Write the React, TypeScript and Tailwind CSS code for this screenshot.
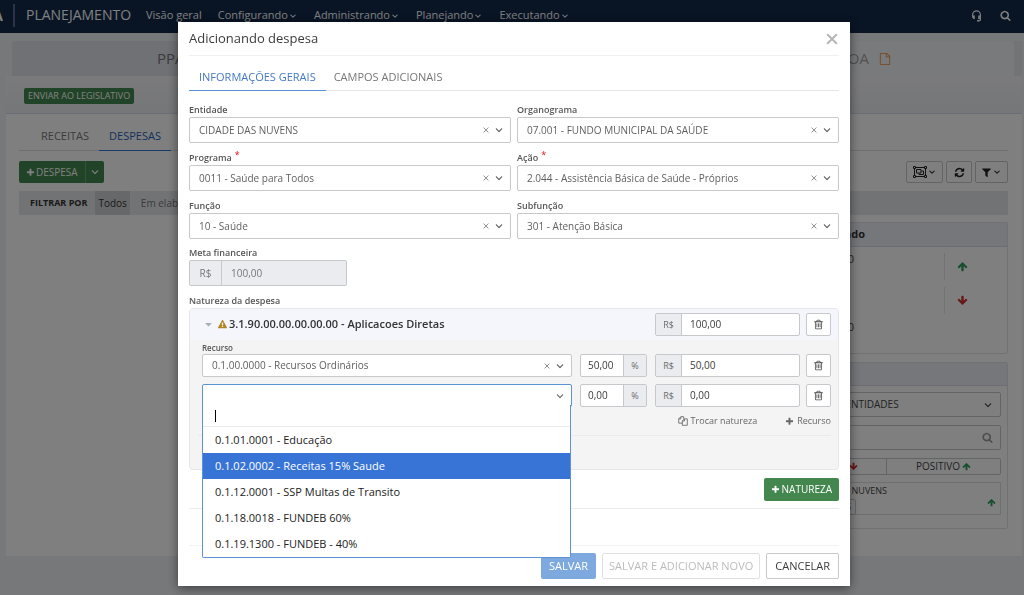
import React, { useState } from 'react';
import clsx from 'clsx';

// 1792-unit glyphs
const ICONS = {
  angleDown: 'M1395 736q0 13-10 23l-466 466q-10 10-23 10t-23-10l-466-466q-10-10-10-23t10-23l80-80q10-10 23-10t23 10l363 363 363-363q10-10 23-10t23 10l80 80q10 10 10 23z',
  caretDown: 'M1408 704q0 26-19 45l-448 448q-19 19-45 19t-45-19l-448-448q-19-19-19-45t19-45 45-19h896q26 0 45 19t19 45z',
  plus: 'M1600 736v192q0 40-28 68t-68 28h-416v416q0 40-28 68t-68 28h-192q-40 0-68-28t-28-68v-416h-416q-40 0-68-28t-28-68v-192q0-40 28-68t68-28h416v-416q0-40 28-68t68-28h192q40 0 68 28t28 68v416h416q40 0 68 28t28 68z',
  arrowUp: 'M1675 971q0 51-37 90l-75 75q-38 38-91 38-54 0-90-38l-294-293v704q0 52-37.500 84.500t-90.500 32.500h-128q-53 0-90.500-32.500t-37.500-84.500v-704l-294 293q-36 38-90 38t-90-38l-75-75q-38-38-38-90 0-53 38-91l651-651q35-37 90-37 54 0 91 37l651 651q37 39 37 91z',
  search: 'M1216 832q0-185-131.500-316.500t-316.500-131.500-316.500 131.500-131.500 316.500 131.500 316.500 316.500 131.500 316.500-131.500 131.500-316.500zm512 832q0 52-38 90t-90 38q-54 0-90-38l-343-342q-179 124-399 124-143 0-273.500-55.500t-225-150-150-225-55.500-273.500 55.500-273.500 150-225 225-150 273.500-55.500 273.500 55.500 225 150 150 225 55.500 273.500q0 220-124 399l343 343q37 37 37 90z',
  warning: 'M1024 1375v-190q0-14-9.500-23.500t-22.500-9.500h-192q-13 0-22.500 9.500t-9.500 23.500v190q0 14 9.500 23.500t22.500 9.500h192q13 0 22.500-9.500t9.500-23.500zm-2-374l18-459q0-12-10-19-13-11-24-11h-220q-11 0-24 11-10 7-10 21l17 457q0 10 10 16.500t24 6.500h185q14 0 23.500-6.500t10.500-16.500zm-14-934l768 1408q35 63-2 126-17 29-46.500 46t-63.500 17h-1536q-34 0-63.500-17t-46.500-46q-37-63-2-126l768-1408q17-31 47-49t65-18 65 18 47 49z',
  trash: 'M704 736v576q0 14-9 23t-23 9h-64q-14 0-23-9t-9-23v-576q0-14 9-23t23-9h64q14 0 23 9t9 23zm256 0v576q0 14-9 23t-23 9h-64q-14 0-23-9t-9-23v-576q0-14 9-23t23-9h64q14 0 23 9t9 23zm256 0v576q0 14-9 23t-23 9h-64q-14 0-23-9t-9-23v-576q0-14 9-23t23-9h64q14 0 23 9t9 23zm128 724v-948h-896v948q0 22 7 40.500t14.500 27 10.500 8.500h832q3 0 10.500-8.500t14.500-27 7-40.500zm-672-1076h448l-48-117q-7-9-17-11h-317q-10 2-17 11zm928 32v64q0 14-9 23t-23 9h-96v948q0 83-47 143.500t-113 60.500h-832q-66 0-113-58.500t-47-141.500v-952h-96q-14 0-23-9t-9-23v-64q0-14 9-23t23-9h309l70-167q15-37 54-63t79-26h320q40 0 79 26t54 63l70 167h309q14 0 23 9t9 23z',
  refresh: 'M1639 1056q0 5-1 7-64 268-268 434.500t-478 166.500q-146 0-282.500-55t-243.500-157l-129 129q-19 19-45 19t-45-19-19-45v-448q0-26 19-45t45-19h448q26 0 45 19t19 45-19 45l-137 137q71 66 161 102t187 36q134 0 250-65t186-179q11-17 53-117 8-23 30-23h192q13 0 22.500 9.500t9.500 22.500zm25-800v448q0 26-19 45t-45 19h-448q-26 0-45-19t-19-45 19-45l138-138q-148-137-349-137-134 0-250 65t-186 179q-11 17-53 117-8 23-30 23h-199q-13 0-22.500-9.500t-9.500-22.500v-7q65-268 270-434.500t480-166.500q146 0 284 55.500t245 156.500l130-129q19-19 45-19t45 19 19 45z',
  filter: 'M1595 295q17 41-14 70l-493 493v742q0 42-39 59-13 5-25 5-27 0-45-19l-256-256q-19-19-19-45v-486l-493-493q-31-29-14-70 17-39 59-39h1280q42 0 59 39z',
  file: 'M1596 380q28 28 48 76t20 88v1152q0 40-28 68t-68 28h-1344q-40 0-68-28t-28-68v-1600q0-40 28-68t68-28h896q40 0 88 20t76 48zm-444-244v376h376q-10-29-22-41l-313-313q-12-12-41-22zm384 1528v-1024h-416q-40 0-68-28t-28-68v-416h-768v1536h1280z',
};

function Icon({ name, className }: { name: keyof typeof ICONS; className?: string }) {
  return (
    <svg viewBox="0 0 1792 1792" fill="currentColor" aria-hidden="true" className={clsx('shrink-0', className)}>
      <path d={ICONS[name]} />
    </svg>
  );
}

function CloseIcon({ className }: { className?: string }) {
  return (
    <svg viewBox="0 0 10 10" fill="none" stroke="currentColor" aria-hidden="true" className={clsx('shrink-0', className)}>
      <path d="M1 1l8 8M9 1l-8 8" strokeWidth="1.6" />
    </svg>
  );
}

function HeadsetIcon() {
  return (
    <svg viewBox="0 0 12 14" fill="none" stroke="currentColor" className="h-3 w-[11px]" aria-hidden="true">
      <path d="M1.500 9V5.500a4.500 4.500 0 0 1 9 0V11.500q0 1-1 1H7" strokeWidth="1.400" />
      <path d="M3 6.500v4M9 6.500v4" strokeWidth="2" />
      <path d="M7 12.500h2" strokeWidth="2" />
    </svg>
  );
}

function ObjectGroupIcon() {
  return (
    <svg viewBox="0 0 14 12" fill="none" stroke="currentColor" className="h-3 w-3.5" aria-hidden="true">
      <path d="M2 1.500h10M2 10.500h10M1.500 2v8M12.500 2v8" />
      <path d="M0.500 0.500h2v2h-2zM11.500 0.500h2v2h-2zM0.500 9.500h2v2h-2zM11.500 9.500h2v2h-2z" />
      <path d="M3.500 3.500h4.500v3.500h-4.500zM8.500 5h2v3.500h-4.500v-1" />
    </svg>
  );
}

function CopyIcon() {
  return (
    <svg viewBox="0 0 14 14" fill="none" stroke="currentColor" className="h-2.5 w-2.5" aria-hidden="true">
      <path d="M6 10H1V4l3-3h4v3M4 1v3H1" strokeWidth="1.200" />
      <path d="M9 4h4v9H6V7zM9 4v3H6" strokeWidth="1.200" />
    </svg>
  );
}

const NAV = ['Configurando', 'Administrando', 'Planejando', 'Executando'];

const FIELDS = [
  { id: 'entidade', label: 'Entidade', value: 'CIDADE DAS NUVENS' },
  { id: 'organograma', label: 'Organograma', value: '07.001 - FUNDO MUNICIPAL DA SAÚDE' },
  { id: 'programa', label: 'Programa', value: '0011 - Saúde para Todos', required: true },
  { id: 'acao', label: 'Ação', value: '2.044 - Assistência Básica de Saúde - Próprios', required: true },
  { id: 'funcao', label: 'Função', value: '10 - Saúde' },
  { id: 'subfuncao', label: 'Subfunção', value: '301 - Atenção Básica' },
];

const RECURSOS = [
  '0.1.01.0001 - Educação',
  '0.1.02.0002 - Receitas 15% Saude',
  '0.1.12.0001 - SSP Multas de Transito',
  '0.1.18.0018 - FUNDEB 60%',
  '0.1.19.1300 - FUNDEB - 40%',
];

function SelectBox({ id, value, className }: { id: string; value: string; className?: string }) {
  return (
    <div className={clsx('flex items-center rounded-xs border border-[#c6c8cb] bg-white pr-[5px] text-[#5f5f5f]', className)}>
      <select id={id} defaultValue={value} className="h-full min-w-0 flex-1 appearance-none bg-transparent pl-[9px] text-[10px] outline-none">
        <option>{value}</option>
      </select>
      <button type="button" aria-label="Limpar" className="mr-1 text-[#8a8a8a]">
        <CloseIcon className="size-1.5" />
      </button>
      <Icon name="angleDown" className="size-3" />
    </div>
  );
}

function MoneyInput({ label, value }: { label: string; value: string }) {
  return (
    <div className="flex h-[23px] rounded-xs border border-[#c6c8cb] bg-white text-[10px]">
      <span className="flex w-[26px] items-center justify-center border-r border-[#c6c8cb] bg-[#eaecf0] text-[9px] text-[#6b6b6b]">R$</span>
      <input aria-label={label} defaultValue={value} className="min-w-0 flex-1 px-2 text-[#3c3c3c] outline-none" />
    </div>
  );
}

function PercentInput({ label, value }: { label: string; value: string }) {
  return (
    <div className="flex h-[23px] rounded-xs border border-[#c6c8cb] bg-white text-[10px]">
      <input aria-label={label} defaultValue={value} className="min-w-0 flex-1 pl-[7px] text-[#3c3c3c] outline-none" />
      <span className="flex w-[23px] items-center justify-center border-l border-[#c6c8cb] bg-[#eaecf0] text-[9px] text-[#6b6b6b]">%</span>
    </div>
  );
}

function TrashButton() {
  return (
    <button
      type="button"
      aria-label="Excluir"
      className="flex h-[23px] items-center justify-center rounded-xs border border-[#c6c8cb] bg-white text-[#4a4a4a]"
    >
      <Icon name="trash" className="size-[11px]" />
    </button>
  );
}

function RecursoPicker() {
  const [active, setActive] = useState(1);

  return (
    <div className="relative h-[23px]">
      <button
        type="button"
        aria-label="Recurso"
        aria-expanded="true"
        className="flex h-full w-full items-center justify-end rounded-xs border border-[#5c93d6] bg-white pr-[5px] text-[#6b6b6b]"
      >
        <Icon name="angleDown" className="size-3" />
      </button>
      <div className="absolute inset-x-0 top-[21px] z-10 mr-px rounded-b-xs border border-t-0 border-[#5c93d6] bg-white text-[11px] text-[#222]">
        <div className="flex h-[22px] items-center border-b border-[#ececec] pl-3">
          <span className="h-3 w-px bg-black" />
          <input aria-label="Buscar recurso" className="h-full min-w-0 flex-1 caret-transparent outline-none" />
        </div>
        <ul role="listbox">
          {RECURSOS.map((recurso, index) => (
            <li
              key={recurso}
              role="option"
              aria-selected={active === index}
              onMouseEnter={() => setActive(index)}
              className={clsx('h-[26px] pl-3 leading-[26px]', active === index && 'bg-[#3874d6] text-white')}
            >
              {recurso}
            </li>
          ))}
        </ul>
      </div>
    </div>
  );
}

function Header() {
  return (
    <header className="flex h-[33px] items-center bg-[#12294a] pb-0.5 text-white">
      <div className="flex w-[3px] justify-end overflow-hidden text-[14px] font-bold">A</div>
      <div className="ml-2.5 h-[23px] w-0.5 bg-[#5a6496]" />
      <span className="ml-[11px] pb-0.5 text-[14px]">PLANEJAMENTO</span>
      <nav className="ml-[15px] flex flex-1 items-center gap-4 text-[11px]">
        <a href="#visao">Visão geral</a>
        {NAV.map((item) => (
          <a key={item} href={`#${item.toLowerCase()}`} className="flex items-center">
            {item}
            <Icon name="angleDown" className="size-2.5" />
          </a>
        ))}
      </nav>
      <button type="button" aria-label="Suporte">
        <HeadsetIcon />
      </button>
      <button type="button" aria-label="Pesquisar" className="mr-[13px] ml-[18px]">
        <Icon name="search" className="size-[11px]" />
      </button>
    </header>
  );
}

function Sidebar() {
  return (
    <aside className="flex w-[246px] flex-col gap-2 pt-[7px] text-[11px] text-[#444]">
      <section className="h-[132px] rounded-xs border border-[#dfe2e9]">
        <h2 className="flex h-6 items-center border-b border-[#d6dae4] bg-[#ebeef7] pl-[47px] text-[11px] font-bold text-[#333]">Resultado</h2>
        <div className="flex justify-between">
          <div className="flex w-[91px] flex-col gap-[52px] pt-1 text-right leading-4">
            <span>100,00</span>
            <span>100,00</span>
          </div>
          <div className="mr-[39px] flex flex-col gap-[7px] pt-1.5">
            <div className="flex h-[27px] items-center border-l border-[#e4e6ec] pl-3">
              <Icon name="arrowUp" className="size-[11px] text-[#2f9e5c]" />
            </div>
            <div className="flex h-[27px] items-center border-l border-[#e4e6ec] pl-3">
              <Icon name="arrowUp" className="size-[11px] rotate-180 text-[#cf2f2f]" />
            </div>
          </div>
        </div>
      </section>
      <section className="h-[167px] rounded-xs border border-[#dfe2e9] pr-1.5">
        <div className="-mr-1.5 h-[23px] border-b border-[#d6dae4] bg-[#ebeef7]" />
        <div className="mt-1.5 flex h-[25px] items-center rounded-xs border border-[#c6c8cb] pr-1.5">
          <select aria-label="Entidades" className="h-full min-w-0 flex-1 appearance-none bg-transparent pl-8 text-[10px] outline-none">
            <option>TODAS AS ENTIDADES</option>
          </select>
          <Icon name="angleDown" className="size-3" />
        </div>
        <div className="mt-2 flex h-[25px] items-center rounded-xs border border-[#c6c8cb] pr-[7px]">
          <input aria-label="Buscar entidade" className="h-full min-w-0 flex-1 outline-none" />
          <Icon name="search" className="size-[11px] text-[#999]" />
        </div>
        <div className="mt-2 flex h-[17px] text-[10px]">
          <button type="button" className="flex flex-1 items-center justify-end gap-0.5 border border-[#c6c8cb] pr-[28px]">
            NEGATIVO <Icon name="arrowUp" className="size-[9px] rotate-180 text-[#cf2f2f]" />
          </button>
          <button type="button" className="-ml-px flex w-[115px] items-center justify-center gap-0.5 rounded-r-xs border border-[#c6c8cb]">
            POSITIVO <Icon name="arrowUp" className="size-[9px] text-[#2f9e5c]" />
          </button>
        </div>
        <div className="mt-[7px] flex h-[33px] items-center justify-between border border-[#dcdee3] pr-1">
          <div className="flex w-[123px] flex-col items-end text-[9px] leading-4">
            <span>CIDADE DAS NUVENS</span>
            <span className="mr-[31px] rounded-xs border border-[#c6c8cb] px-1 leading-[14px] text-[#1f3354]">RECEITAS</span>
          </div>
          <Icon name="arrowUp" className="mt-2 size-[9px] text-[#2f9e5c]" />
        </div>
      </section>
    </aside>
  );
}

function Planning() {
  return (
    <main className="pt-2 pr-0.5 pb-[39px] pl-1.5">
      <div className="ml-1.5 bg-[#e6e8ed] pr-2">
        <div className="grid h-[35px] grid-cols-3 text-[15px] text-[#777]">
          <div className="flex items-center rounded-tl-sm bg-[#e0e3ea] pl-[145px]">PPA</div>
          <div className="bg-[#e0e3ea]" />
          <div className="flex items-center gap-2.5 rounded-tr-sm bg-[#f3f4f8] pl-40 text-[#a5a5a5]">
            LOA <Icon name="file" className="size-3 text-[#f08a3c]" />
          </div>
        </div>
      </div>
      <div className="flex h-[38px] items-center border-b border-[#d5dbee] bg-linear-to-b from-[#f5f5f8] to-[#eceef3] pt-0.5 pl-[18px]">
        <button type="button" className="h-4 rounded-xs bg-[#43874f] px-1 text-[9px] leading-4 font-medium text-white">ENVIAR AO LEGISLATIVO</button>
      </div>
      <div className="bg-white pr-3.5 pb-[27px] pl-[13px]">
        <div className="flex h-[37px] items-end border-b border-[#dcdee3] pl-3 text-[11px] text-[#777]">
          <a href="#receitas" className="px-2.5 pb-1.5">RECEITAS</a>
          <a href="#despesas" className="-mb-px border-b border-[#2f74d0] px-2.5 pb-1.5 font-medium text-[#2563b8]">DESPESAS</a>
        </div>
        <div className="mt-2.5 flex h-[22px] items-stretch justify-between">
          <div className="flex text-[10px] font-medium text-white">
            <button type="button" className="flex items-center gap-px rounded-l-xs bg-[#43874f] px-[7px]">
              <Icon name="plus" className="size-[9px]" /> DESPESA
            </button>
            <button type="button" aria-label="Mais opções" className="flex w-[19px] items-center justify-center rounded-r-xs border-l border-[#6ba677] bg-[#43874f]">
              <Icon name="angleDown" className="size-3" />
            </button>
          </div>
          <div className="flex gap-[3px] text-[#222]">
            <button type="button" aria-label="Agrupar" className="flex w-[37px] items-center justify-center rounded-xs border border-[#c6c8cb]">
              <ObjectGroupIcon />
              <Icon name="angleDown" className="size-2.5" />
            </button>
            <button type="button" aria-label="Atualizar" className="flex w-[26px] items-center justify-center rounded-xs border border-[#c6c8cb]">
              <Icon name="refresh" className="size-[11px]" />
            </button>
            <button type="button" aria-label="Filtrar" className="flex w-[33px] items-center justify-center rounded-xs border border-[#c6c8cb]">
              <Icon name="filter" className="size-[11px]" />
              <Icon name="angleDown" className="size-2.5" />
            </button>
          </div>
        </div>
        <div className="mt-2 flex h-6 items-center bg-[#e4e6ea] pl-[11px] text-[10px] text-[#555]">
          <span className="mr-2 text-[9px] font-bold text-[#333]">FILTRAR POR</span>
          <a href="#todos" className="mr-2 bg-[#cfd1d5] px-[3px] leading-6 text-[#333]">Todos</a>
          <a href="#elaboracao" className="px-[3px] leading-6 text-[#777]">Em elaboração</a>
        </div>
        <div className="flex justify-end">
          <Sidebar />
        </div>
      </div>
    </main>
  );
}

function ExpenseModal() {
  return (
    <div role="dialog" aria-modal="true" aria-labelledby="modal-title" className="w-full max-w-[672px] bg-white px-[11px] pb-[7px] text-[#555] shadow-[0_2px_10px_rgba(0,0,0,0.5)]">
      <div className="flex h-[34px] items-center justify-between border-b border-[#f0f0f0]">
        <h1 id="modal-title" className="text-[13px] text-[#3c3c3c]">Adicionando despesa</h1>
        <button type="button" aria-label="Fechar" className="mr-px text-[#b5b5b5]">
          <CloseIcon className="size-3" />
        </button>
      </div>

      <div className="flex h-[35px] items-end border-b border-[#e6e6e6] text-[11px] text-[#777]">
        <a href="#gerais" className="-mb-px border-b border-[#5c93d6] px-2.5 pb-[5px] font-medium text-[#4579c4]">INFORMAÇÕES GERAIS</a>
        <a href="#adicionais" className="px-2 pb-[5px]">CAMPOS ADICIONAIS</a>
      </div>

      <div className="mt-[11px] grid grid-cols-2 gap-x-1.5 gap-y-[7px]">
        {FIELDS.map((field) => (
          <div key={field.id}>
            <label htmlFor={field.id} className="flex h-[15px] items-start text-[9px] leading-[15px] font-semibold">
              {field.label}
              {field.required && <span className="ml-[3px] leading-[9px] text-[#d93a3a]">*</span>}
            </label>
            <SelectBox id={field.id} value={field.value} className="h-[26px]" />
          </div>
        ))}
      </div>

      <label htmlFor="meta" className="mt-1.5 block h-[15px] text-[9px] leading-[15px] font-semibold">Meta financeira</label>
      <div className="flex h-[26px] w-[158px] rounded-xs border border-[#c6c8cb] bg-[#eaecf0] text-[10px] text-[#777]">
        <span className="flex w-8 items-center justify-center border-r border-[#c6c8cb]">R$</span>
        <input id="meta" disabled defaultValue="100,00" className="min-w-0 flex-1 px-[9px]" />
      </div>

      <h2 className="mt-[7px] h-[15px] text-[9px] leading-[15px] font-semibold">Natureza da despesa</h2>
      <div className="rounded-sm border border-[#e6e6e6] bg-[#f4f4f4] pb-[33px]">
        <div className="flex h-[31px] items-center bg-[#f4f6fb] pr-[7px] pl-[13px] text-[11px] font-semibold text-[#333]">
          <Icon name="caretDown" className="size-[11px] text-[#a5adb8]" />
          <Icon name="warning" className="mr-0.5 ml-1 size-[9px] text-[#b58422]" />
          <span className="flex-1">3.1.90.00.00.00.00.00 - Aplicacoes Diretas</span>
          <div className="grid grid-cols-[145px_25px] gap-1.5 font-normal">
            <MoneyInput label="Valor da natureza" value="100,00" />
            <TrashButton />
          </div>
        </div>
        <div className="pr-[7px] pl-3">
          <label htmlFor="recurso" className="block h-3.5 text-[8px] leading-[15px] font-semibold">Recurso</label>
          <div className="grid grid-cols-[1fr_67px_176px] gap-x-2 gap-y-[7px]">
            <SelectBox id="recurso" value="0.1.00.0000 - Recursos Ordinários" className="h-[23px]" />
            <PercentInput label="Percentual do recurso 1" value="50,00" />
            <div className="grid grid-cols-[145px_25px] gap-1.5">
              <MoneyInput label="Valor do recurso 1" value="50,00" />
              <TrashButton />
            </div>
            <RecursoPicker />
            <PercentInput label="Percentual do recurso 2" value="0,00" />
            <div className="grid grid-cols-[145px_25px] gap-1.5">
              <MoneyInput label="Valor do recurso 2" value="0,00" />
              <TrashButton />
            </div>
          </div>
          <div className="-ml-1 flex h-[29px] items-center justify-end gap-7 border-b border-[#eaeaea] text-[9px] text-[#666]">
            <button type="button" className="flex items-center gap-[3px]">
              <CopyIcon /> Trocar natureza
            </button>
            <button type="button" className="flex items-center gap-[3px]">
              <Icon name="plus" className="size-[9px]" /> Recurso
            </button>
          </div>
        </div>
      </div>

      <div className="flex justify-end border-b border-[#ebebeb] pt-2 pb-[7px]">
        <button type="button" className="flex h-[23px] items-center gap-0.5 rounded-xs bg-[#43874f] px-[7px] text-[10px] font-medium text-white">
          <Icon name="plus" className="size-[9px]" /> NATUREZA
        </button>
      </div>

      <div className="mt-9 flex justify-end gap-1.5 border-t border-[#f2f2f2] pt-[7px] text-[11px]">
        <button type="button" className="h-[26px] rounded-xs bg-[#7ea9de] px-2 text-white">SALVAR</button>
        <button type="button" disabled className="h-[26px] rounded-xs border border-[#e0e0e0] px-1.5 text-[#bcbcbc]">SALVAR E ADICIONAR NOVO</button>
        <button type="button" className="h-[26px] rounded-xs border border-[#c6c8cb] px-2 text-[#3c3c3c]">CANCELAR</button>
      </div>
    </div>
  );
}

export default function App() {
  return (
    <div className="min-h-screen bg-[#eef1f5] font-['Open_Sans','Noto_Sans',sans-serif]">
      <Header />
      <Planning />
      <div className="fixed inset-0 flex items-start justify-center overflow-hidden bg-black/50 pt-[22px] pl-1">
        <ExpenseModal />
      </div>
    </div>
  );
}
